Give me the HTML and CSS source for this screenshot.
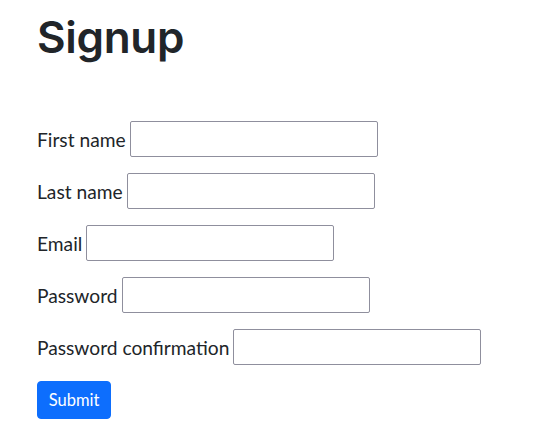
FILE: index.html
```html
<!DOCTYPE html>
<html>
<head>
<meta charset="utf-8">
<link rel="stylesheet" href="styles.css">
</head>
<body>
<main class="page">
  <h1 class="title">Signup</h1>
  <form class="form">
    <div class="row"><label class="label" for="fn">First name</label><input class="field" id="fn" type="text"></div>
    <div class="row"><label class="label" for="ln">Last name</label><input class="field" id="ln" type="text"></div>
    <div class="row"><label class="label" for="em">Email</label><input class="field" id="em" type="email"></div>
    <div class="row"><label class="label" for="pw">Password</label><input class="field" id="pw" type="password"></div>
    <div class="row"><label class="label" for="pc">Password confirmation</label><input class="field" id="pc" type="password"></div>
    <div class="actions"><button class="btn" type="submit">Submit</button></div>
  </form>
</main>
</body>
</html>
```

FILE: styles.css
```css
html, body {
  margin: 0;
  padding: 0;
  background: #fff;
}
.page {
  padding: 11px 37px 0;
  font-family: Lato, "Liberation Sans", sans-serif;
  color: #212529;
}
.title {
  margin: 0 0 57px;
  font-family: Inter, "Open Sans", sans-serif;
  font-weight: 600;
  font-size: 44px;
  line-height: 53px;
  letter-spacing: -0.3px;
  color: #212529;
}
.form {
  display: flex;
  flex-direction: column;
  gap: 16px;
}
.row {
  display: flex;
  align-items: center;
  gap: 4px;
  height: 36px;
}
.label {
  font-size: 19.2px;
  line-height: 27px;
}
.field {
  box-sizing: border-box;
  width: 248px;
  height: 36px;
  margin: 0;
  border: 1px solid #8f8f9d;
  border-radius: 2px;
  background: #fff;
  padding: 0 4px;
}
.actions {
  display: flex;
}
.btn {
  box-sizing: border-box;
  height: 38px;
  width: 74px;
  border: 1px solid #0d6efd;
  border-radius: 4px;
  background: #0d6efd;
  color: #fff;
  font-family: Lato, "Liberation Sans", sans-serif;
  font-size: 16.5px;
  padding: 0;
}
```
